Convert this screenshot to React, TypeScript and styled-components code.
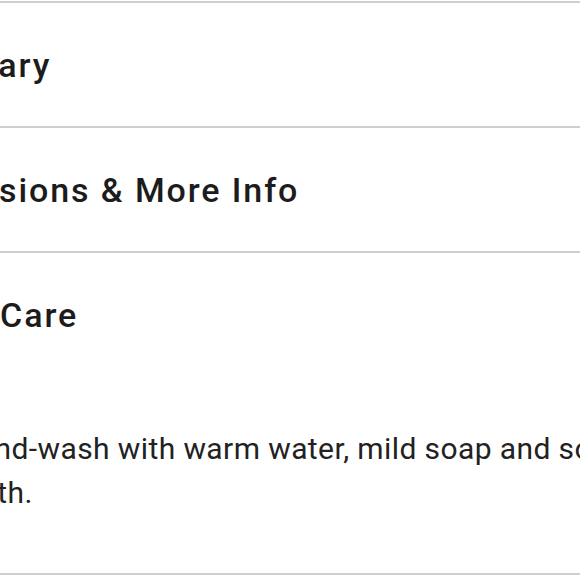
import React from 'react';
import styled, { createGlobalStyle } from 'styled-components';

const GlobalStyle = createGlobalStyle`
    html, body {
        margin: 0;
        padding: 0;
        background: #ffffff;
    }
    body {
        font-family: Roboto, "Noto Sans", "Liberation Sans", sans-serif;
    }
`;

const Viewport = styled.div`
    width: 580px;
    height: 580px;
    overflow: hidden;
    padding-top: 1px;
    box-sizing: border-box;
`;

const Accordion = styled.div`
    margin-left: -108px;
    width: 900px;
    border-bottom: 2px solid #cfcfcf;
`;

const Section = styled.section`
    border-top: 2px solid #cfcfcf;
`;

const Header = styled.div`
    height: 123px;
    display: flex;
    align-items: center;
    font-size: 34px;
    font-weight: 500;
    letter-spacing: 1.9px;
    color: #1c1c1c;
`;

const Body = styled.div`
    padding: 51px 0 58px 64px;
    width: 680px;
    font-size: 30px;
    line-height: 44px;
    letter-spacing: 0.4px;
    color: #222222;
`;

interface Item {
    title: string;
    body?: string;
}

const items: Item[] = [
    { title: 'Summary' },
    { title: 'Dimensions & More Info' },
    {
        title: 'Use & Care',
        body: 'Hand-wash with warm water, mild soap and soft cloth.',
    },
];

const App = (): JSX.Element => (
    <>
        <GlobalStyle />
        <Viewport>
            <Accordion>
                {items.map(item => (
                    <Section key={item.title}>
                        <Header>{item.title}</Header>
                        {item.body && <Body>{item.body}</Body>}
                    </Section>
                ))}
            </Accordion>
        </Viewport>
    </>
);

export default App;
